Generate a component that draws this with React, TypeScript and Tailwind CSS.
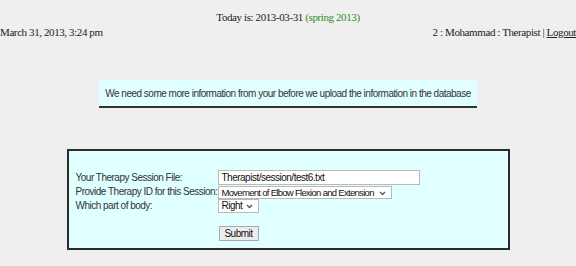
import React from "react";

function Chevron() {
    return (
        <svg
            width="7"
            height="5"
            viewBox="0 0 7 5"
            className="absolute right-[5px] top-[4px] pointer-events-none"
        >
            <path d="M1 1 L3.5 3.5 L6 1" fill="none" stroke="#555" strokeWidth="1.3" />
        </svg>
    );
}

function FakeSelect({ value, className }: { value: string; className: string }) {
    return (
        <div className={`relative border border-[#b9b9b9] bg-white ${className}`}>
            <span className="block pl-[3px] text-[#111] whitespace-nowrap overflow-hidden">
                {value}
            </span>
            <Chevron />
        </div>
    );
}

export default function App() {
    return (
        <div className="w-[576px] h-[266px] bg-[#efefef] overflow-hidden relative">
            <header className="pt-[10px] font-['Liberation_Serif',serif] text-[11px] tracking-[-0.4px] text-[#222] leading-[15px]">
                <div className="text-center">
                    Today is: 2013-03-31{" "}
                    <span className="text-[#2e8b2e]">(spring 2013)</span>
                </div>
                <div className="flex justify-between">
                    <span>March 31, 2013, 3:24 pm</span>
                    <span>
                        2 : Mohammad : Therapist |{" "}
                        <span className="underline">Logout</span>
                    </span>
                </div>
            </header>

            <section className="mt-[40px] flex justify-center">
                <div className="w-[378px] h-[28px] bg-[#e0ffff] border-b-2 border-[#333] flex items-center justify-center font-['Liberation_Sans',sans-serif] text-[10px] tracking-[-0.5px] text-[#333] whitespace-nowrap">
                    We need some more information from your before we upload the information in the database
                </div>
            </section>

            <section className="mt-[41px] flex justify-center">
                <div className="w-[443px] h-[101px] bg-[#e0ffff] border-2 border-[#2b2b2b] pl-[7px] pt-[19px] font-['Liberation_Sans',sans-serif] text-[10px] tracking-[-0.5px] text-[#333]">
                    <div className="grid grid-cols-[142px_1fr] items-center">
                        <div className="h-[15px] leading-[15px] whitespace-nowrap">Your Therapy Session File:</div>
                        <div className="h-[15px] w-[202px] border border-[#b9b9b9] bg-white pl-[3px] leading-[13px] text-[#111]">
                            Therapist/session/test6.txt
                        </div>
                        <div className="h-[14px] leading-[14px] whitespace-nowrap">Provide Therapy ID for this Session:</div>
                        <FakeSelect
                            value="Movement of Elbow Flexion and Extension"
                            className="w-[174px] h-[13px] leading-[11px] mt-[1px] text-[9.5px] tracking-[-0.7px]"
                        />
                        <div className="h-[14px] leading-[14px] whitespace-nowrap">Which part of body:</div>
                        <FakeSelect value="Right" className="w-[41px] h-[14px] leading-[12px]" />
                    </div>
                    <div className="pl-[143px] pt-[13px]">
                        <button className="block h-[15px] w-[40px] border border-[#aaa] bg-[#ececec] text-[10px] tracking-[-0.5px] leading-[13px] text-[#111] font-['Liberation_Sans',sans-serif]">
                            Submit
                        </button>
                    </div>
                </div>
            </section>
        </div>
    );
}
